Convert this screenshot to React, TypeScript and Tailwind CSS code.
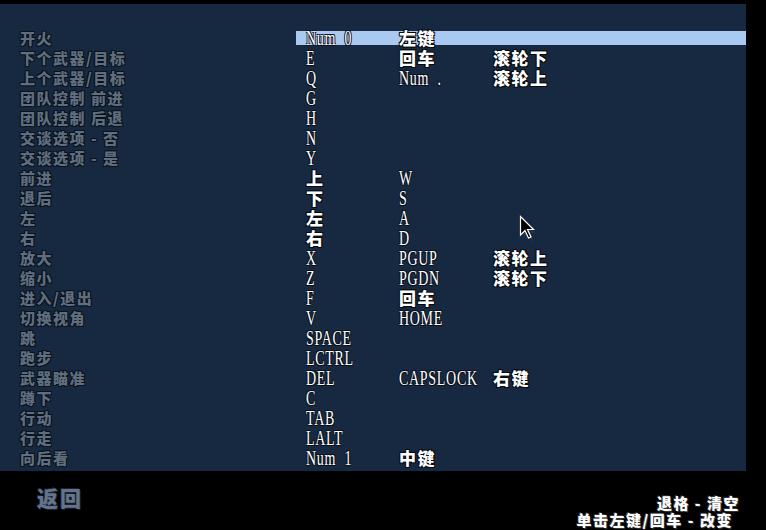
import React from "react";

const rows: [string, string, string, string][] = [
  ["开火", "Num 0", "左键", ""],
  ["下个武器/目标", "E", "回车", "滚轮下"],
  ["上个武器/目标", "Q", "Num .", "滚轮上"],
  ["团队控制 前进", "G", "", ""],
  ["团队控制 后退", "H", "", ""],
  ["交谈选项 - 否", "N", "", ""],
  ["交谈选项 - 是", "Y", "", ""],
  ["前进", "上", "W", ""],
  ["退后", "下", "S", ""],
  ["左", "左", "A", ""],
  ["右", "右", "D", ""],
  ["放大", "X", "PGUP", "滚轮上"],
  ["缩小", "Z", "PGDN", "滚轮下"],
  ["进入/退出", "F", "回车", ""],
  ["切换视角", "V", "HOME", ""],
  ["跳", "SPACE", "", ""],
  ["跑步", "LCTRL", "", ""],
  ["武器瞄准", "DEL", "CAPSLOCK", "右键"],
  ["蹲下", "C", "", ""],
  ["行动", "TAB", "", ""],
  ["行走", "LALT", "", ""],
  ["向后看", "Num 1", "中键", ""],
];

const cjk = /[\u4e00-\u9fff]/;

function Value({ text }: { text: string }) {
  if (!text) return null;
  if (cjk.test(text)) {
    return (
      <span className="block h-[20px] font-['Noto_Sans_CJK_SC',sans-serif] font-black text-[17px] leading-[20px] tracking-[1.5px] text-white whitespace-nowrap [text-shadow:1px_1px_0_#05080d,-1px_-1px_0_#05080d,1px_-1px_0_#05080d,-1px_1px_0_#05080d]">
        {text}
      </span>
    );
  }
  return (
    <span className="block h-[20px] origin-left scale-x-[0.7] font-['Liberation_Serif',serif] text-[20px] leading-[20px] tracking-[1px] text-white whitespace-pre [text-shadow:1px_1px_0_#0a0f18,-1px_-1px_0_#0a0f18,1px_-1px_0_#0a0f18,-1px_1px_0_#0a0f18]">
      {text.replace(" ", "  ")}
    </span>
  );
}

export default function App() {
  return (
    <div className="w-[766px] h-[530px] bg-black flex flex-col overflow-hidden relative">
      <div className="mt-[4px] w-[746px] h-[467px] bg-[#162940] pt-[24px] flex flex-col">
        {rows.map((r, i) => (
          <div key={i} className="h-[20px] flex items-center">
            <div className="w-[296px] h-[20px] pl-[20px] font-['Noto_Sans_CJK_SC',sans-serif] font-black text-[15px] leading-[20px] tracking-[1.5px] text-[#5f6d7e] whitespace-pre [text-shadow:1px_1px_0_#0a121c,-1px_-1px_0_#0a121c,1px_-1px_0_#0a121c,-1px_1px_0_#0a121c]">
              {r[0]}
            </div>
            <div
              className={
                i === 0
                  ? "flex-1 h-[14px] flex items-center bg-[#aac9f0]"
                  : "flex-1 h-[14px] flex items-center"
              }
            >
              <div className="w-[103px] pl-[10px] flex items-center">
                <Value text={r[1]} />
              </div>
              <div className="w-[94px] flex items-center">
                <Value text={r[2]} />
              </div>
              <div className="flex-1 flex items-center">
                <Value text={r[3]} />
              </div>
            </div>
          </div>
        ))}
      </div>
      <div className="flex-1 flex justify-between">
        <div className="pl-[37px] pt-[16px] font-['Noto_Sans_CJK_SC',sans-serif] font-black text-[21px] leading-none tracking-[2px] text-[#64748a] [text-shadow:1px_1px_0_#1a2230,-1px_-1px_0_#1a2230]">
          返回
        </div>
        <div className="pt-[23px] pr-[26px] flex flex-col items-end font-['Noto_Sans_CJK_SC',sans-serif] font-black text-[15px] leading-[17px] tracking-[1.5px] text-white whitespace-pre [text-shadow:1px_1px_0_#333,-1px_-1px_0_#333]">
          <div>退格 - 清空</div>
          <div className="pr-[7px]">单击左键/回车 - 改变</div>
        </div>
      </div>
      <svg
        className="absolute left-[519px] top-[215px]"
        width="18"
        height="28"
        viewBox="0 0 18 28"
      >
        <path d="M3 3 L3 22 L7.5 17.5 L11 25 L13.5 24 L10 16.5 L16 16.5 Z" fill="#2a3a50" opacity="0.5" transform="translate(1.5,1.5)" />
        <path d="M1.5 1.5 L1.5 20 L6 15.5 L9.5 23 L12 22 L8.5 14.5 L14.5 14.5 Z" fill="#000" stroke="#fff" strokeWidth="1.2" strokeLinejoin="miter" />
      </svg>
    </div>
  );
}
